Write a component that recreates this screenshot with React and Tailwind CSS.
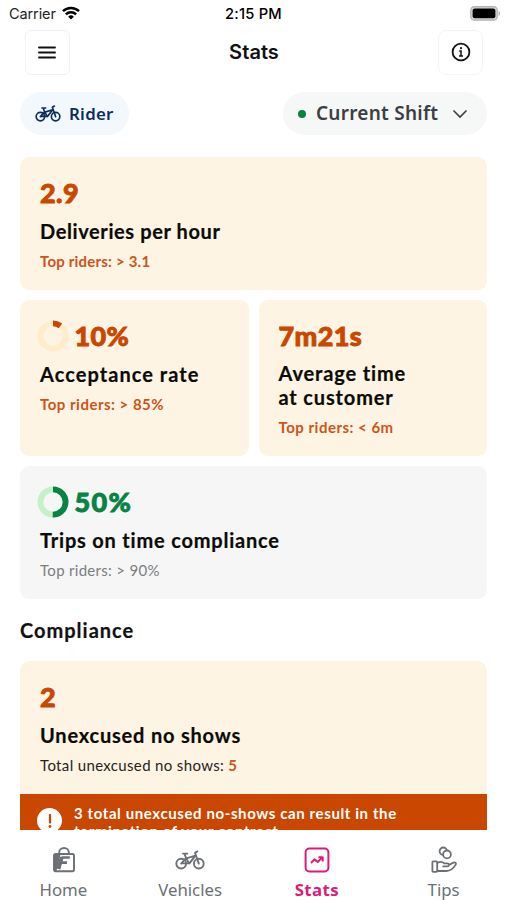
import React from "react";

function BikeIcon({ className }) {
  return (
    <svg viewBox="0 0 30 22" className={className} fill="none" stroke="currentColor" strokeWidth="1.9" strokeLinecap="round" strokeLinejoin="round">
      <circle cx="6.2" cy="14.6" r="4.9" />
      <circle cx="23.8" cy="14.6" r="4.9" />
      <path d="M6.2 14.6 11 9 14.2 14.4H6.2M9.6 5.2 11 9M8 4.6h4.4M23.8 14.6 20 3.8l2.4-1.4" />
      <path d="M11.4 9.4 20.4 6.6 14.6 14.2" strokeWidth="2" />
    </svg>
  );
}

function Ring({ percent, color, track }) {
  const length = 2 * Math.PI * 12.6;
  return (
    <svg viewBox="0 0 32 32" className="-ml-[3.5px] mr-1.5 size-8" fill="none">
      <circle cx="16" cy="16" r="12.6" stroke={track} strokeWidth="5.8" />
      <circle
        cx="16"
        cy="16"
        r="12.6"
        stroke={color}
        strokeWidth="5.8"
        strokeDasharray={`${(length * percent) / 100} ${length}`}
        transform="rotate(-90 16 16)"
      />
    </svg>
  );
}

function StatusBar() {
  return (
    <div className="grid h-7 grid-cols-3 items-center pr-1.5 pl-[9px] font-['Inter',sans-serif] text-[15px] text-[#222]">
      <div className="flex items-center gap-1.5">
        <span className="text-[14.5px] tracking-[-0.1px]">Carrier</span>
        <svg viewBox="0 0 18 14" className="-mt-0.5 h-3.5 w-[18px]" fill="none" stroke="#000" strokeWidth="2.5">
          <path d="M1 5.2a11.3 11.3 0 0 1 16 0M3.9 8.4a7.2 7.2 0 0 1 10.2 0" />
          <path d="M9 13.4 6.2 10.7a4 4 0 0 1 5.6 0Z" fill="#000" stroke="none" />
        </svg>
      </div>
      <span className="-ml-[3px] text-center text-[14.7px] font-medium tracking-[0.2px] text-black">2:15 PM</span>
      <svg viewBox="0 0 31 15" className="-mt-0.5 h-[15px] w-[31px] justify-self-end">
        <rect x="0.8" y="0.8" width="26.4" height="13.2" rx="3.6" fill="#ddd" stroke="#b4b4b4" strokeWidth="1.4" />
        <rect x="2.6" y="2.6" width="22.8" height="9.6" rx="2" fill="#000" />
        <path d="M28.6 5v5c1.8-.8 1.8-4.2 0-5Z" fill="#aaa" />
      </svg>
    </div>
  );
}

function Header() {
  return (
    <header className="flex h-12 items-center justify-between pr-6 pl-[25px]">
      <button className="flex size-[45px] items-center justify-center rounded-md border border-[#f1f1f1] pr-0.5">
        <svg viewBox="0 0 18 14" className="h-3.5 w-[18px]" stroke="#111" strokeWidth="1.9" strokeLinecap="round">
          <path d="M1 2.5h16M1 7.5h16M1 12.5h16" />
        </svg>
      </button>
      <h1 className="font-['Inter',sans-serif] text-xl font-semibold tracking-[0.05px] text-[#111]">Stats</h1>
      <button className="flex size-[45px] items-center justify-center rounded-lg border border-[#f4f4f4]">
        <svg viewBox="0 0 20 20" className="size-5" fill="none" stroke="#111" strokeWidth="1.8">
          <circle cx="10" cy="10" r="8.4" />
          <path d="M8.2 9H10v4.6M8 13.9h4" strokeWidth="1.5" />
          <circle cx="10" cy="6.2" r="1.1" fill="#111" stroke="none" />
        </svg>
      </button>
    </header>
  );
}

function StatCard({
  value,
  title,
  note,
  ring,
  tone = "tracking-[0.4px] text-[#c94700]",
  bg = "bg-[#fef4e4]",
  titleStyle = "leading-6 tracking-[0.8px]",
  noteStyle = "font-bold tracking-[0.5px] text-[#cb551a]",
}) {
  return (
    <div className={`h-full rounded-[9px] px-5 pt-5 pb-[19px] ${bg}`}>
      <div className={`flex h-8 items-center text-[27px] leading-8 font-black [-webkit-text-stroke:0.9px] ${tone}`}>
        {ring}
        <span>{value}</span>
      </div>
      <h2 className={`mt-2.5 text-xl font-bold whitespace-pre-line text-[#0b0b06] [-webkit-text-stroke:0.2px] ${titleStyle}`}>{title}</h2>
      <p className={`mt-2 text-[15px] leading-5 ${noteStyle}`}>{note}</p>
    </div>
  );
}

const tabs = [
  {
    label: "Home",
    icon: (
      <svg viewBox="0 0 24 28" className="ml-0.5 h-7 w-6" fill="none" stroke="currentColor" strokeWidth="1.9">
        <rect x="2" y="8" width="20" height="17.2" rx="1.6" />
        <path d="M7.2 8V6.4a4.8 4.4 0 0 1 9.6 0V8" />
        <path d="M2 8h6.6L4.4 25.2H2Z" fill="currentColor" stroke="none" />
        <path d="M9.6 11.5h8.2M8.6 16.6h6.4" strokeWidth="2.6" />
        <path d="M9.8 11 6.4 23" strokeWidth="4" />
      </svg>
    ),
  },
  { label: "Vehicles", icon: <BikeIcon className="h-[22px] w-[30px]" /> },
  {
    label: "Stats",
    icon: (
      <svg viewBox="0 0 26 26" className="size-[26px]" fill="none" stroke="currentColor" strokeWidth="2" strokeLinejoin="round">
        <rect x="1.6" y="1.6" width="22.8" height="22.8" rx="3.6" />
        <path d="m7 16 3.5-3.6 3.2 2.6 4.6-4.6M14.4 10.2h4.3v4.2" />
      </svg>
    ),
  },
  {
    label: "Tips",
    icon: (
      <svg viewBox="0 0 26 28" className="h-7 w-[26px]" fill="none" stroke="currentColor" strokeWidth="1.8" strokeLinecap="round" strokeLinejoin="round">
        <circle cx="12.3" cy="5.2" r="3.7" />
        <circle cx="16" cy="8.4" r="3.9" fill="#fff" />
        <rect x="1.4" y="15.4" width="4.8" height="10.4" rx="0.8" />
        <path d="M6.4 17c2.6-1.6 5-1.4 6.8.4h3c2.2 0 2.2 3 0 3h-4M18 19l4.4-2.4c1.9-.7 3.2.6 2.1 2.3-2.3 3.9-5.5 6-9 6.1H6.4" />
      </svg>
    ),
  },
];

function TabBar() {
  return (
    <nav className="grid h-[70px] shrink-0 grid-cols-4 bg-white font-['Noto_Sans',sans-serif] text-[16.8px]">
      {tabs.map(({ label, icon }) => (
        <a
          key={label}
          className={`flex flex-col items-center pt-4 ${label === "Stats" ? "font-bold tracking-[0.4px] text-[#dc1a78]" : "text-[#6c7075]"}`}
        >
          <span className="flex h-7 items-center">{icon}</span>
          <span className="mt-1 leading-6">{label}</span>
        </a>
      ))}
    </nav>
  );
}

export default function App() {
  return (
    <div className="flex h-[900px] w-[507px] flex-col overflow-hidden bg-white font-['Lato',sans-serif]">
      <StatusBar />
      <Header />
      <main className="min-h-0 flex-1 overflow-hidden px-5 pt-4">
        {/* Role and shift filter */}
        <div className="flex items-center justify-between font-['Noto_Sans',sans-serif]">
          <div className="flex h-[43px] w-[109px] items-center gap-2 rounded-full bg-[#f3f8fc] pl-[15px] text-[#0d2d60]">
            <BikeIcon className="h-[19px] w-[26px]" />
            <span className="text-[16.8px] font-semibold tracking-[0.3px]">Rider</span>
          </div>
          <button className="flex h-[43px] w-[204px] items-center rounded-full bg-[#f6f7f7] pl-[15px] text-[#3c3e42]">
            <span className="size-2 rounded-full bg-[#078343]" />
            <span className="ml-2.5 text-[19px] font-semibold tracking-[0.25px]">Current Shift</span>
            <svg viewBox="0 0 16 10" className="ml-3.5 h-2.5 w-4" fill="none" stroke="currentColor" strokeWidth="1.6">
              <path d="m1.5 1.5 6.5 6.5 6.5-6.5" />
            </svg>
          </button>
        </div>

        <div className="mt-[22px] grid grid-cols-2 gap-2.5">
          <div className="col-span-2">
            <StatCard
              value="2.9"
              title="Deliveries per hour"
              titleStyle="leading-6 tracking-[0.6px]"
              note="Top riders: > 3.1"
              noteStyle="font-bold tracking-[0.2px] text-[#cb551a]"
            />
          </div>
          <StatCard
            value="10%"
            title="Acceptance rate"
            titleStyle="leading-6 tracking-[1.05px]"
            note="Top riders: > 85%"
            ring={<Ring percent={10} color="#c94700" track="#feeccb" />}
          />
          <StatCard
            value="7m21s"
            title={"Average time\nat customer"}
            titleStyle="leading-[23.5px] tracking-[0.85px]"
            note="Top riders: < 6m"
          />
          <div className="col-span-2">
            <StatCard
              value="50%"
              title="Trips on time compliance"
              note="Top riders: > 90%"
              tone="tracking-[1.4px] text-[#078343]"
              bg="bg-[#f6f6f6]"
              noteStyle="tracking-[0.3px] text-[#7a7d80]"
              ring={<Ring percent={50} color="#078343" track="#c5f0ca" />}
            />
          </div>
        </div>

        <h2 className="mt-[19px] text-xl leading-6 font-bold tracking-[1px] text-[#111] [-webkit-text-stroke:0.2px]">Compliance</h2>
        <div className="mt-[19px] overflow-hidden rounded-[9px]">
          <StatCard
            value="2"
            title="Unexcused no shows"
            bg="rounded-b-none bg-[#fef4e4]"
            noteStyle="tracking-[0.35px] text-[#24241e]"
            note={
              <>
                Total unexcused no shows: <b className="text-[#cb551a]">5</b>
              </>
            }
          />
          <div className="flex bg-[#c94700] px-[17px] py-2.5 text-white">
            <span className="mt-1 flex size-[25px] items-center justify-center rounded-full bg-white">
              <svg viewBox="0 0 4 14" className="h-3.5 w-1" fill="#c94700">
                <rect x="0.9" width="2.2" height="9.5" rx="0.8" />
                <circle cx="2" cy="12.5" r="1.4" />
              </svg>
            </span>
            <p className="ml-3 w-[350px] text-[15px] leading-[18px] font-bold tracking-[0.6px]">
              3 total unexcused no-shows can result in the termination of your contract
            </p>
          </div>
        </div>
      </main>
      <TabBar />
    </div>
  );
}
